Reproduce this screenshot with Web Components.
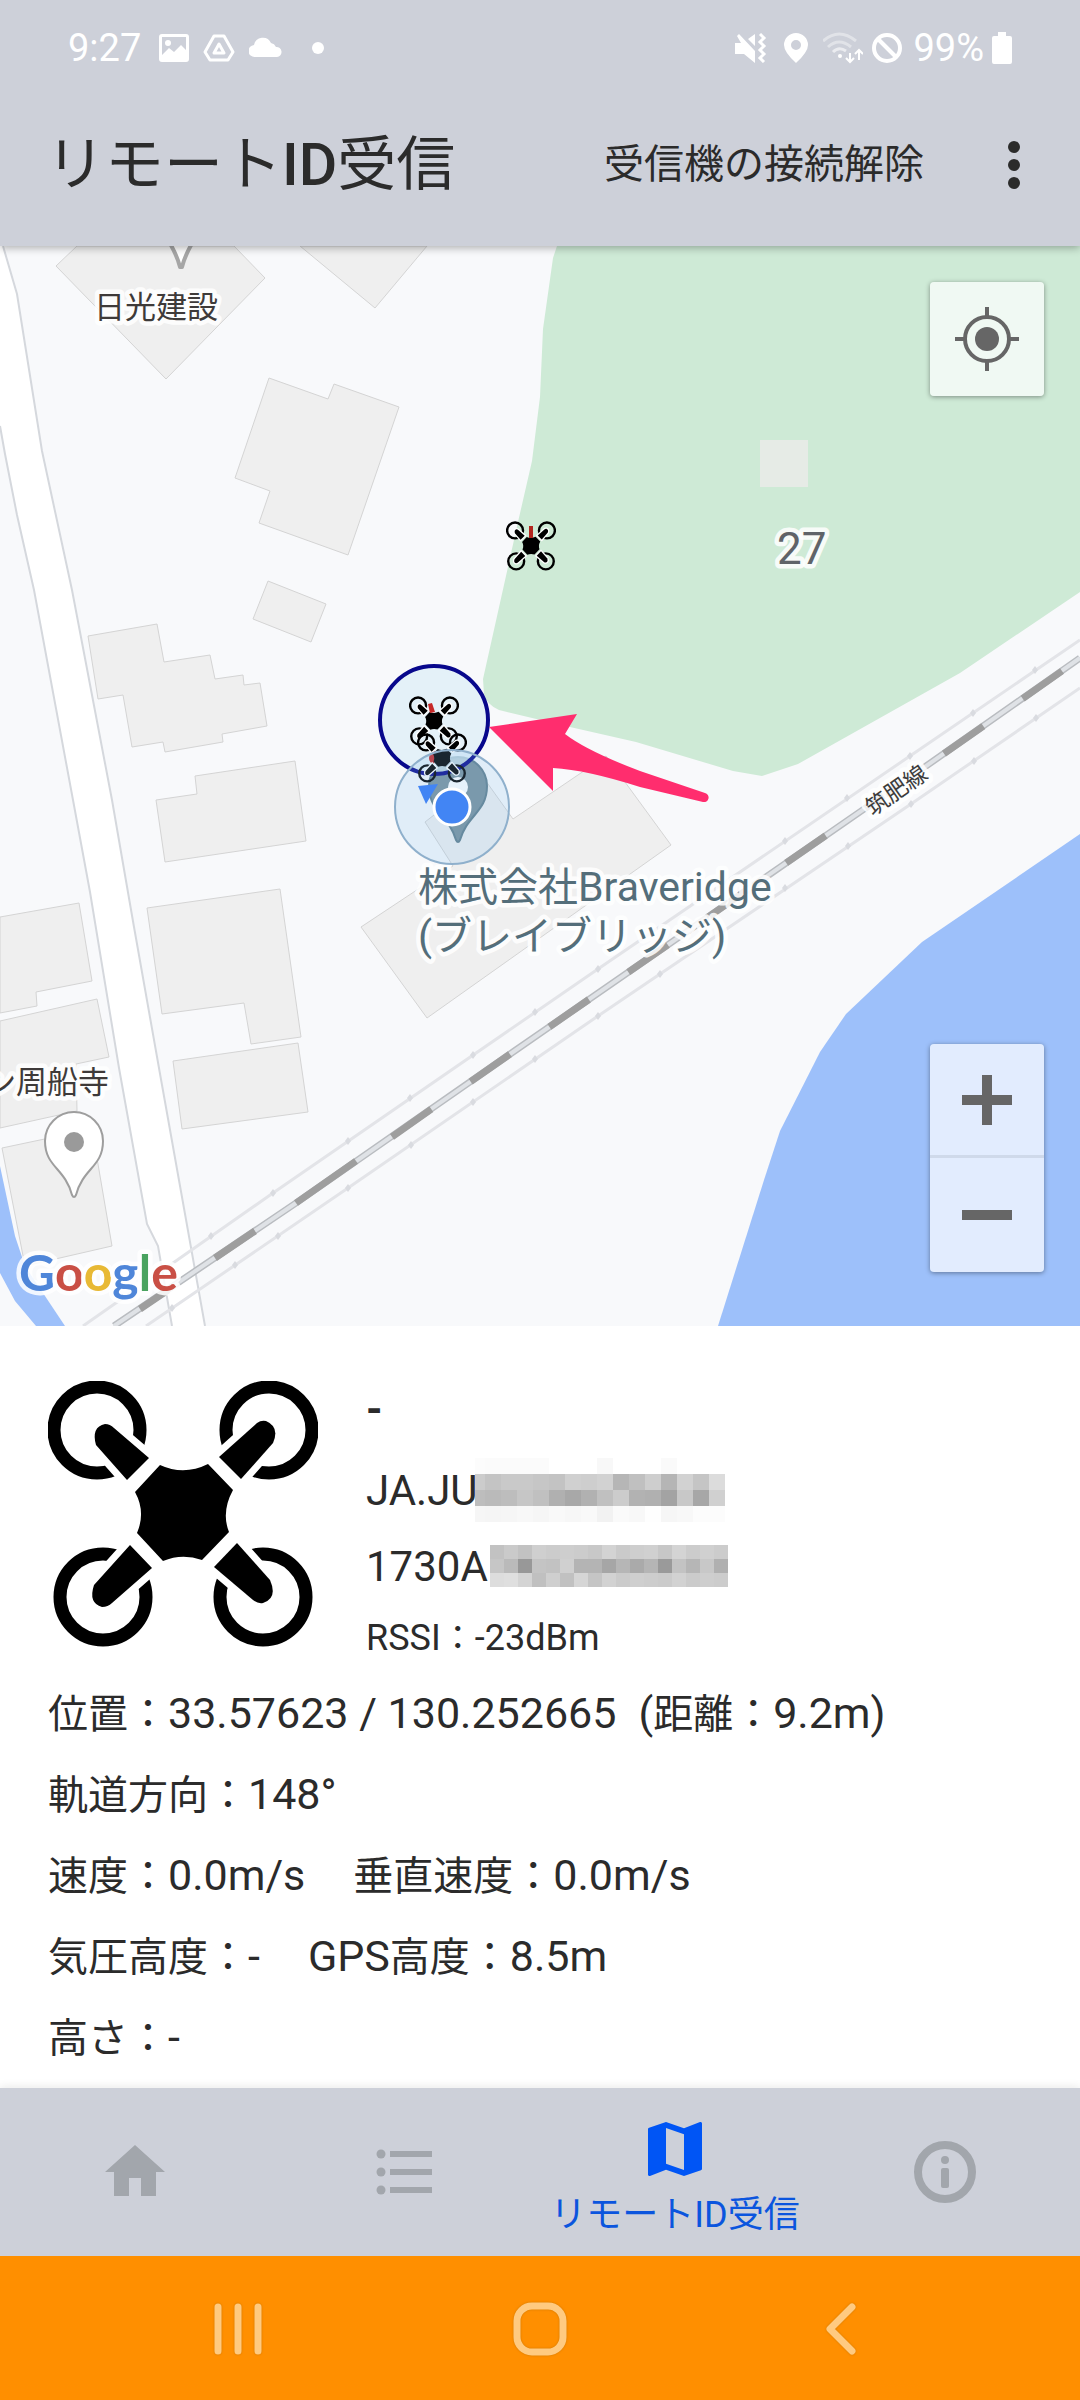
<!DOCTYPE html>
<html lang="ja">
<head>
<meta charset="utf-8">
<meta name="viewport" content="width=device-width, initial-scale=1">
<title>リモートID受信</title>
<style>
  body {
    margin: 0;
    color: #2b2b2b;
    background: #fff;
    font-family: Roboto, "Noto Sans CJK JP", sans-serif;
  }
</style>
</head>
<body>
<remote-id-app></remote-id-app>

<script>
// quadcopter silhouette, drawn in a 270x266 box
const droneShape = `
  <g fill="none" stroke="#000" stroke-width="13">
    <circle cx="49" cy="49" r="43"/>
    <circle cx="221" cy="49" r="43"/>
    <circle cx="55" cy="216" r="43"/>
    <circle cx="215" cy="216" r="43"/>
  </g>
  <g stroke="#fff" stroke-width="14" paint-order="stroke">
    <path d="M48 64Q43 46 57 43Q62 43 66 47L101 77L79 99Z"/>
    <path d="M225 62Q232 46 218 40Q213 39 209 42L171 76L193 98Z"/>
    <path d="M46 204Q40 222 54 226Q60 226 64 222L104 187L82 164Z"/>
    <path d="M222 199Q230 217 215 222Q210 223 205 219L166 186L189 162Z"/>
  </g>
  <path d="M112 84Q136 95 160 83L185 109Q173 131 181 151L154 179Q134 172 115 180L89 152Q98 131 87 111Z"/>
`;

class StatusBar extends HTMLElement {
  constructor() {
    super();
    this.shadowDOM = this.attachShadow({ mode: "open" });
  }

  connectedCallback() {
    this.render();
  }

  render() {
    this.shadowDOM.innerHTML = `
        <style>
          :host {
            display: flex;
            position: relative;
            z-index: 2;
            align-items: center;
            justify-content: space-between;
            height: 96px;
            padding: 0 68px;
            background: #cdd0d9;
            color: #fff;
            font-size: 38px;
            line-height: 48px;
          }
          div {
            display: flex;
            align-items: center;
          }
          .left { gap: 14px; }
          .left .time { margin-right: 4px; }
          .left .dot { margin-left: 16px; }
          .right { gap: 8px; }
          svg { display: block; }
        </style>

        <div class="left">
          <span class="time">9:27</span>
          <svg width="30" height="30" viewBox="0 0 30 30"><path fill="#fff" fill-rule="evenodd" d="M3 1H27Q30 1 30 4V26Q30 29 27 29H3Q0 29 0 26V4Q0 1 3 1ZM3 4V22L10 15L15 19L22 12L27 17V4ZM9 7a3 3 0 1 1 0 6a3 3 0 1 1 0-6Z"/></svg>
          <svg width="32" height="30" viewBox="0 0 32 30" fill="none" stroke="#fff" stroke-linejoin="round"><path stroke-width="3" d="M11 3H21L30 19L25 27H7L2 19Z"/><path stroke-width="3" d="M16 11L21 20H11Z"/></svg>
          <svg width="33" height="30" viewBox="0 0 33 30"><path fill="#fff" d="M6 24a6 6 0 0 1-1-12a9 9 0 0 1 17-2a7 7 0 0 1 5 4a5 5 0 0 1 1 10Z"/></svg>
          <svg class="dot" width="12" height="12" viewBox="0 0 12 12"><circle cx="6" cy="6" r="6" fill="#fff"/></svg>
        </div>

        <div class="right">
          <svg width="40" height="30" viewBox="0 0 40 30"><path fill="#fff" d="M0 10H6L2 3L4 1L20 18V30L9 21H0ZM20 1V13L13 6Z"/><path fill="none" stroke="#fff" stroke-width="3" d="M25 1L29 5L25 9L29 13L25 17L29 21L25 25L29 29"/></svg>
          <svg width="32" height="30" viewBox="0 0 32 30"><path fill="#fff" fill-rule="evenodd" d="M13 0a12 12 0 0 1 12 12Q25 19 13 30Q1 19 1 12A12 12 0 0 1 13 0ZM13 7a5 5 0 1 0 0 10a5 5 0 1 0 0-10Z"/></svg>
          <svg width="40" height="32" viewBox="0 0 40 32" fill="none" stroke="#fff"><path stroke-width="3" opacity=".4" d="M0 9Q16-5 33 9M5 15Q16 5 28 15"/><path stroke-width="3" opacity=".6" d="M10 20Q16 14 23 19"/><circle cx="17" cy="24" r="2" fill="#fff" stroke="none"/><path stroke-width="2" d="M27 21V30M23 26L27 30L31 26M36 28V18M32 22L36 18L40 22"/></svg>
          <svg width="34" height="32" viewBox="0 0 34 32" fill="none" stroke="#fff" stroke-width="4"><circle cx="16" cy="16" r="13"/><path d="M7 7L25 25"/></svg>
          <span>99%</span>
          <svg width="20" height="32" viewBox="0 0 20 32"><path fill="#fff" d="M6 0H14V4H18Q20 4 20 6V30Q20 32 18 32H2Q0 32 0 30V6Q0 4 2 4H6Z"/></svg>
        </div>
      `;
  }
}

customElements.define("status-bar", StatusBar);

class AppBar extends HTMLElement {
  constructor() {
    super();
    this.shadowDOM = this.attachShadow({ mode: "open" });
  }

  connectedCallback() {
    this.render();
  }

  render() {
    this.shadowDOM.innerHTML = `
        <style>
          :host {
            display: block;
            position: relative;
            z-index: 1;
            background: #cdd0d9;
            box-shadow: 0 2px 8px rgba(0, 0, 0, 0.3);
          }
          header {
            display: flex;
            align-items: center;
            height: 138px;
            padding: 0 36px 12px 46px;
          }
          h1 {
            flex: 1;
            margin: 0;
            font-size: 59px;
            line-height: 72px;
            font-weight: 400;
          }
          button {
            border: 0;
            padding: 0;
            background: none;
            color: inherit;
            font: inherit;
            font-size: 40px;
            line-height: 56px;
            cursor: pointer;
          }
          .menu {
            width: 60px;
            height: 72px;
            margin-left: 60px;
          }
          svg { display: block; margin: auto; }
          ::slotted(b) { font-weight: 500; }
        </style>

        <header>
          <h1><slot></slot></h1>
          <button type="button">受信機の接続解除</button>
          <button type="button" class="menu" aria-label="メニュー">
            <svg width="12" height="48" viewBox="0 0 12 48" fill="#2b2b2b"><circle cx="6" cy="6" r="6"/><circle cx="6" cy="24" r="6"/><circle cx="6" cy="42" r="6"/></svg>
          </button>
        </header>
      `;
  }
}

customElements.define("app-bar", AppBar);

class DroneMap extends HTMLElement {
  constructor() {
    super();
    this.shadowDOM = this.attachShadow({ mode: "open" });
  }

  connectedCallback() {
    this.render();
  }

  get ties() {
    const points = [
      [473, 1055], [410, 1098], [348, 1141], [273, 1193], [211, 1236], [535, 1012], [598, 969],
      [785, 841], [847, 798], [910, 756], [973, 713], [1035, 670],
      [535, 1059], [473, 1102], [411, 1145], [348, 1188], [278, 1236], [235, 1265], [172, 1308],
      [598, 1016], [660, 974], [785, 888], [848, 846], [911, 804], [974, 761], [1036, 718]
    ];
    return points.map(([x, y]) => `<path d="M${x} ${y - 4}l3 4l-3 4l-3-4z"/>`).join("");
  }

  render() {
    this.shadowDOM.innerHTML = `
        <style>
          :host {
            display: block;
            position: relative;
            aspect-ratio: 1 / 1;
            overflow: hidden;
            background: #f8f9fb;
          }
          .map {
            display: block;
            width: 100%;
            height: 100%;
          }
          .label {
            paint-order: stroke;
            stroke: #fff;
            stroke-width: 9px;
            stroke-linejoin: round;
            stroke-opacity: 0.85;
          }
          .place { font-size: 31px; fill: #3e3a39; }
          .office { font-size: 40px; fill: #546e7a; }
          .latin { font-size: 41px; }
          .block { font-size: 44px; fill: #5f6368; }
          .rail { font-size: 23px; fill: #3c3c3c; }
          .logo { font-family: Lato, sans-serif; font-size: 50px; font-weight: 700; }
          button {
            display: block;
            width: 114px;
            height: 114px;
            padding: 0;
            border: 0;
            background: none;
            cursor: pointer;
          }
          button svg { display: block; margin: auto; }
          .locate,
          .zoom {
            position: absolute;
            right: 36px;
            border-radius: 4px;
            background: rgba(255, 255, 255, 0.7);
            box-shadow: 0 1px 5px rgba(0, 0, 0, 0.4);
          }
          .locate { top: 36px; }
          .zoom { bottom: 54px; }
          .zoom button:first-child {
            border-bottom: 3px solid #cfd9ea;
          }
        </style>

        <svg class="map" viewBox="0 246 1080 1080" preserveAspectRatio="xMidYMid slice">
          <defs>
            <symbol id="drone" viewBox="0 0 270 266">${droneShape}</symbol>
          </defs>

          <!-- park and water -->
          <path fill="#ceead6" d="M557 246L553 258L543 329L540 397L532 461L518 522L483 679L484 694Q486 704 499 710L570 727L636 742L733 771L762 776L798 764L960 673L1080 592V246Z"/>
          <path fill="#e6ebe6" d="M760 440H808V487H760Z"/>
          <path fill="#9dc0fa" d="M1080 834L922 942L846 1014L820 1052L780 1131L764 1180L718 1326H1080Z"/>
          <path fill="#9dc0fa" d="M0 1166L15 1236L25 1266L65 1326H36L15 1301L0 1273Z"/>

          <!-- buildings -->
          <g fill="#efefef" stroke="#d4d4d4" stroke-width="1">
            <path d="M77 246L56 266L166 379L265 278L234 246Z"/>
            <path d="M300 246L375 308L427 246Z"/>
            <path d="M269 378L328 399L334 384L399 407L348 555L259 523L270 491L235 478Z"/>
            <path d="M268 581L326 604L311 642L253 619Z"/>
            <path d="M88 636L157 624L164 662L210 655L215 679L243 675L244 685L260 683L267 726L222 734L223 742L165 752L163 742L132 747L123 695L98 699Z"/>
            <path d="M195 776L295 761L306 841L165 862L156 800L197 794Z"/>
            <path d="M147 908L280 889L301 1037L251 1044L244 1003L162 1014Z"/>
            <path d="M173 1061L298 1043L308 1112L182 1129Z"/>
            <path d="M0 917L79 903L92 981L36 992L37 1006L0 1013Z"/>
            <path d="M0 1021L97 999L109 1057L76 1064L77 1111L0 1128Z"/>
            <path d="M2 1148L92 1129L112 1246L25 1266Z"/>
            <path d="M361 927L453 866L425 822L483 777L513 819L606 756L671 845L427 1018Z"/>
          </g>

          <!-- road -->
          <path fill="#fff" d="M0 246H3L17 294L42 451L72 590L112 800L134 927L162 1085L205 1326H172L158 1246L147 1224L119 1068L90 892L73 800L34 590L17 515L0 426Z"/>
          <g fill="none" stroke="#d5d8dd" stroke-width="2">
            <path d="M3 246L17 294L42 451L72 590L112 800L134 927L162 1085L205 1326"/>
            <path d="M0 426L5 454L17 515L34 590L73 800L90 892L119 1068L147 1224L158 1246L172 1326"/>
          </g>

          <!-- railway -->
          <g fill="none" stroke="#e3e4e8" stroke-width="3">
            <path d="M1080 640L910 756L598 969L273 1193L83 1326"/>
            <path d="M1080 688L911 804L598 1016L348 1188L146 1326"/>
          </g>
          <g fill="#d9dbe0">${this.ties}</g>
          <g fill="none">
            <path stroke="#b9bcc0" stroke-width="7" d="M1080 658L919 771L513 1052L296 1203L114 1326"/>
            <path stroke="#dfe2e6" stroke-width="4" d="M1080 658L919 771L513 1052L296 1203L114 1326"/>
            <path stroke="#9e9e9e" stroke-width="7" stroke-dasharray="48 48" d="M1062 671L919 771L513 1052L356 1162"/>
            <path stroke="#9e9e9e" stroke-width="7" d="M356 1161L296 1203M255 1231L215 1258M168 1290L140 1309"/>
          </g>

          <!-- place pins -->
          <path fill="#fff" stroke="#a6a6a6" stroke-width="4" stroke-linejoin="round" d="M168 240Q177 255 180 267H182Q185 255 194 240"/>
          <path fill="#fff" stroke="#9e9e9e" stroke-width="2" d="M74 1112a29 29 0 0 1 29 29C103 1167 83 1168 76 1195Q74 1199 72 1195C65 1168 45 1167 45 1141A29 29 0 0 1 74 1112Z"/>
          <circle cx="74" cy="1142" r="10" fill="#9a9a9a"/>
          <path fill="#78909c" stroke="#607d8b" stroke-width="2" d="M458 757a29 29 0 0 1 29 29C487 812 467 815 460 840Q458 844 456 840C449 815 429 812 429 786A29 29 0 0 1 458 757Z"/>
          <circle cx="458" cy="787" r="10" fill="#fff"/>

          <!-- labels -->
          <text class="label place" x="94" y="318">日光建設</text>
          <text class="label place" x="109" y="1093" text-anchor="end">ン周船寺</text>
          <text class="label block" x="777" y="564">27</text>
          <text class="label rail" transform="translate(901 797) rotate(-35)" text-anchor="middle">筑肥線</text>
          <text class="label office" x="418" y="901">株式会社<tspan class="latin">Braveridge</tspan></text>
          <text class="label office" x="418" y="950"><tspan class="latin">(</tspan>ブレイブリッジ<tspan class="latin">)</tspan></text>
          <text class="label logo" x="19" y="1291"><tspan fill="#4f86d9">G</tspan><tspan fill="#c94f45">o</tspan><tspan fill="#e8b935">o</tspan><tspan fill="#4f86d9">g</tspan><tspan fill="#4aa360">l</tspan><tspan fill="#c94f45">e</tspan></text>

          <!-- drones -->
          <circle cx="434" cy="720" r="54" fill="#dceef6" fill-opacity="0.7" stroke="#08088c" stroke-width="4"/>
          <use href="#drone" x="506" y="521" width="50" height="50"/>
          <path fill="#b3261e" d="M529 526h4v12h-4z"/>
          <use href="#drone" x="409" y="696" width="50" height="50"/>
          <path fill="#c62828" d="M428 704l4-1l3 9l-5 1z"/>
          <path fill="#c62828" d="M436 751q-7 1-7 7q0 5 5 6z"/>
          <use href="#drone" x="417" y="733" width="50" height="50"/>

          <!-- current position -->
          <circle cx="452" cy="807" r="57" fill="#82bdf0" fill-opacity="0.2" stroke="#8fb0cc" stroke-width="2"/>
          <path fill="#4285f4" d="M418 786L438 784L426 804Z"/>
          <circle cx="452" cy="807" r="18" fill="#4285f4" stroke="#fff" stroke-width="3"/>

          <!-- pointer arrow -->
          <path fill="#ff2d6e" d="M489 727L577 714L565 734Q587 751 640 771L705 793a4 4 0 0 1-2 9L640 787Q587 770 553 768V791Z"/>
        </svg>

        <div class="locate">
          <button type="button" aria-label="現在地">
            <svg width="66" height="66" viewBox="0 0 66 66" fill="none" stroke="#666" stroke-width="4"><circle cx="33" cy="33" r="22"/><circle cx="33" cy="33" r="12" fill="#666" stroke="none"/><path d="M33 1V11M33 55V65M1 33H11M55 33H65"/></svg>
          </button>
        </div>
        <div class="zoom">
          <button type="button" aria-label="拡大">
            <svg width="50" height="50" viewBox="0 0 50 50"><path fill="#666" d="M20 0H30V20H50V30H30V50H20V30H0V20H20Z"/></svg>
          </button>
          <button type="button" aria-label="縮小">
            <svg width="50" height="50" viewBox="0 0 50 50"><path fill="#666" d="M0 20H50V30H0Z"/></svg>
          </button>
        </div>
      `;
  }
}

customElements.define("drone-map", DroneMap);

// mosaic of grey cells that hides the tail of an identifier
class MaskedText extends HTMLElement {
  constructor() {
    super();
    this.shadowDOM = this.attachShadow({ mode: "open" });
  }

  connectedCallback() {
    this.render();
  }

  render() {
    const size = Number(this.getAttribute("cell"));
    const crop = Number(this.getAttribute("crop") || 0);
    const rows = this.getAttribute("rows").split("|").map(row => row.trim().split(" "));
    const cells = rows.map((row, y) => row.map((shade, x) =>
      `<rect x="${x * size}" y="${y * size}" width="${size}" height="${size}" fill="#${shade.repeat(3)}"/>`
    ).join("")).join("");
    const width = rows[0].length * size - crop;
    const height = rows.length * size;

    this.shadowDOM.innerHTML = `
        <style>
          :host { display: block; }
          svg { display: block; }
        </style>
        <svg width="${width}" height="${height}" viewBox="${crop} 0 ${width} ${height}" shape-rendering="crispEdges">${cells}</svg>
      `;
  }
}

customElements.define("masked-text", MaskedText);

class DroneDetail extends HTMLElement {
  constructor() {
    super();
    this.shadowDOM = this.attachShadow({ mode: "open" });
  }

  connectedCallback() {
    this.render();
  }

  render() {
    this.shadowDOM.innerHTML = `
        <style>
          :host {
            display: block;
            padding: 44px 48px 0;
            background: #fff;
            font-size: 40px;
          }
          .summary {
            display: flex;
            gap: 48px;
          }
          .summary > svg {
            flex: none;
            display: block;
            margin-top: 11px;
          }
          .ids { flex: 1; }
          .ids > div {
            display: flex;
            align-items: center;
            font-size: 42px;
          }
          .name { line-height: 80px; font-weight: 700; }
          .model { height: 80px; }
          .model masked-text { margin-left: -3px; }
          .serial { height: 72px; gap: 2px; }
          .ids .rssi { font-size: 36px; line-height: 72px; }
          .rssi span { font-size: 34px; }
          p {
            display: flex;
            gap: 48px;
            margin: 0;
            line-height: 81px;
            white-space: pre;
          }
          p.position { gap: 22px; }
          i {
            font-style: normal;
            font-size: 43px;
            line-height: 43px;
          }
        </style>

        <section class="summary">
          <svg width="270" height="266" viewBox="0 0 270 266">${droneShape}</svg>
          <div class="ids">
            <div class="name">-</div>
            <div class="model">JA.JU<masked-text cell="16" crop="6" rows="fc fb fb fb fb ff ff ff f8 ff ff ff fa ff ff ff|cc c4 c9 c9 c6 c3 d0 ce d2 b6 c0 ce b5 d2 c5 dc|bd ba bd c6 c0 b0 a8 b1 c0 cc b2 b0 a3 c8 a7 d0|f6 f5 f6 f8 f6 f9 f7 f9 f2 fa f8 fe f6 f8 fc fc"></masked-text></div>
            <div class="serial">1730A<masked-text cell="14" rows="c2 ca c2 cf cc ce cc c8 d3 ca ce d0 c7 d4 cc d0 cc|c6 ba 98 c4 c2 d0 b4 b4 a6 b6 aa b5 9a c3 b6 c8 b0|dd df d4 c0 cf c1 d6 c5 d2 cb cf cd cb d2 cb ce cc"></masked-text></div>
            <div class="rssi">RSSI<span>：</span>-23dBm</div>
          </div>
        </section>
        <p class="position"><span>位置：<i>33.57623 / 130.252665</i></span><span><i>(</i>距離：<i>9.2m)</i></span></p>
        <p><span>軌道方向：<i>148°</i></span></p>
        <p><span>速度：<i>0.0m/s</i></span><span>垂直速度：<i>0.0m/s</i></span></p>
        <p><span>気圧高度：<i>-</i></span><span><i>GPS</i>高度：<i>8.5m</i></span></p>
        <p><span>高さ：<i>-</i></span></p>
      `;
  }
}

customElements.define("drone-detail", DroneDetail);

class TabBar extends HTMLElement {
  constructor() {
    super();
    this.shadowDOM = this.attachShadow({ mode: "open" });
  }

  connectedCallback() {
    this.render();
  }

  render() {
    this.shadowDOM.innerHTML = `
        <style>
          :host {
            display: block;
            background: #cdd0d9;
            box-shadow: 0 -2px 8px rgba(0, 0, 0, 0.08);
          }
          nav {
            display: grid;
            grid-template-columns: repeat(4, 1fr);
            height: 168px;
          }
          a {
            display: flex;
            flex-direction: column;
            align-items: center;
            justify-content: center;
            color: #a2a6ac;
            text-decoration: none;
            font-size: 36px;
            line-height: 48px;
            white-space: nowrap;
          }
          a.active {
            gap: 6px;
            padding-top: 8px;
            color: #0b55de;
          }
          svg { display: block; fill: currentColor; }
          .active svg { color: #0055f5; }
        </style>

        <nav>
          <a href="#home" aria-label="ホーム">
            <svg width="72" height="72" viewBox="0 0 24 24"><path d="M10 20v-6h4v6h5v-8h3L12 3 2 12h3v8z"/></svg>
          </a>
          <a href="#list" aria-label="一覧">
            <svg width="72" height="72" viewBox="0 0 24 24"><circle cx="4" cy="6" r="1.5"/><circle cx="4" cy="12" r="1.5"/><circle cx="4" cy="18" r="1.5"/><path d="M7 5h14v2H7zM7 11h14v2H7zM7 17h14v2H7z"/></svg>
          </a>
          <a href="#map" class="active" aria-current="page">
            <svg width="72" height="72" viewBox="0 0 24 24"><path d="M20.5 3l-.16.03L15 5.1 9 3 3.36 4.9c-.21.07-.36.25-.36.48V20.5c0 .28.22.5.5.5l.16-.03L9 18.9l6 2.1 5.64-1.9c.21-.07.36-.25.36-.48V3.5c0-.28-.22-.5-.5-.5zM15 19l-6-2.11V5l6 2.11V19z"/></svg>
            リモートID受信
          </a>
          <a href="#info" aria-label="情報">
            <svg width="72" height="72" viewBox="0 0 72 72"><circle cx="36" cy="36" r="27" fill="none" stroke="currentColor" stroke-width="8"/><circle cx="36" cy="24" r="4"/><rect x="32" y="32" width="8" height="20" rx="2"/></svg>
          </a>
        </nav>
      `;
  }
}

customElements.define("tab-bar", TabBar);

class SystemNav extends HTMLElement {
  constructor() {
    super();
    this.shadowDOM = this.attachShadow({ mode: "open" });
  }

  connectedCallback() {
    this.render();
  }

  render() {
    this.shadowDOM.innerHTML = `
        <style>
          :host {
            display: grid;
            grid-template-columns: repeat(3, 1fr);
            height: 144px;
            padding: 2px 8% 0;
            box-sizing: border-box;
            background: #ff8f00;
          }
          button {
            border: 0;
            padding: 0;
            background: none;
            cursor: pointer;
          }
          svg {
            display: block;
            margin: auto;
            fill: none;
            stroke: #ffca80;
            stroke-width: 7px;
            stroke-linecap: round;
            stroke-linejoin: round;
            filter: drop-shadow(0 0 1px #d07800);
          }
        </style>

        <button type="button" aria-label="履歴"><svg width="56" height="56" viewBox="0 0 56 56"><path d="M8 6V50M28 6V50M48 6V50"/></svg></button>
        <button type="button" aria-label="ホーム画面"><svg width="56" height="56" viewBox="0 0 56 56"><rect x="5" y="5" width="46" height="46" rx="15"/></svg></button>
        <button type="button" aria-label="戻る"><svg width="56" height="56" viewBox="0 0 56 56"><path d="M38 6L16 28L38 50"/></svg></button>
      `;
  }
}

customElements.define("system-nav", SystemNav);

class RemoteIdApp extends HTMLElement {
  constructor() {
    super();
    this.shadowDOM = this.attachShadow({ mode: "open" });
  }

  connectedCallback() {
    this.render();
  }

  render() {
    this.shadowDOM.innerHTML = `
        <style>
          :host {
            display: flex;
            flex-direction: column;
            min-height: 100vh;
          }
          drone-detail { flex: 1; }
        </style>

        <status-bar></status-bar>
        <app-bar>リモート<b>ID</b>受信</app-bar>
        <drone-map></drone-map>
        <drone-detail></drone-detail>
        <tab-bar></tab-bar>
        <system-nav></system-nav>
      `;
  }
}

customElements.define("remote-id-app", RemoteIdApp);
</script>
</body>
</html>
